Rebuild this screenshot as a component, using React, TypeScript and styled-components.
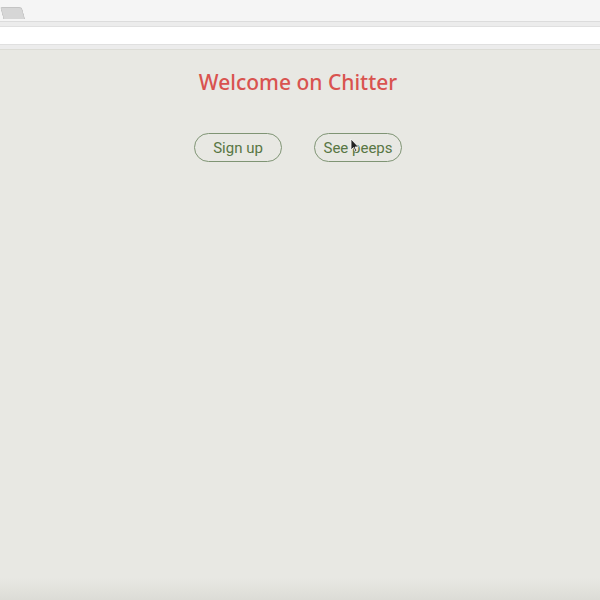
import React from "react";
import styled, { createGlobalStyle } from "styled-components";

const Global = createGlobalStyle`
  html, body { margin: 0; padding: 0; }
  body { background: #e8e8e3; font-family: "Liberation Sans", Arial, sans-serif; }
`;

const Frame = styled.div`
  width: 600px;
  height: 600px;
  display: flex;
  flex-direction: column;
  overflow: hidden;
  position: relative;
`;

const TabStrip = styled.div`
  height: 21px;
  background: #f5f5f5;
  display: flex;
  align-items: flex-end;
  padding-left: 0;
  border-bottom: 1px solid #dcdcdc;
`;

const Tab = styled.div`
  width: 20px;
  height: 11px;
  margin-bottom: 2px;
  background: #d6d6d6;
  border: 1px solid #c4c4c4;
  border-bottom: none;
  border-radius: 2px 3px 0 0;
  transform: skewX(15deg);
  transform-origin: top left;
`;

const Divider = styled.div`
  height: 4px;
  background: #ececec;
  border-bottom: 1px solid #e0e0e0;
`;

const AddressBar = styled.div`
  height: 17px;
  background: #ffffff;
`;

const BottomChrome = styled.div`
  height: 4px;
  background: #ececec;
  border-top: 1px solid #e0e0e0;
  border-bottom: 1px solid #dcdcd6;
`;

const Page = styled.main`
  flex: 1;
  background: linear-gradient(to bottom, #e8e8e3 0%, #e8e8e3 96%, #dcdcd6 100%);
  display: flex;
  flex-direction: column;
  align-items: center;
  padding: 17px 4px 0 0;
`;

const Title = styled.h1`
  margin: 0;
  font-family: "Noto Sans", "Open Sans", sans-serif;
  font-weight: 500;
  font-size: 21px;
  line-height: 30px;
  color: #d9534f;
`;

const Actions = styled.div`
  display: flex;
  gap: 32px;
  margin-top: 36px;
`;

const PillButton = styled.button`
  width: 88px;
  height: 29px;
  border: 1px solid #7f9474;
  border-radius: 15px;
  background: transparent;
  color: #587644;
  font-family: Roboto, "Liberation Sans", Arial, sans-serif;
  font-size: 15px;
  padding: 0;
  cursor: pointer;
`;

const Cursor = styled.svg`
  position: absolute;
  left: 350px;
  top: 138px;
  width: 10px;
  height: 15px;
`;

export default function App() {
  return (
    <Frame>
      <Global />
      <TabStrip>
        <Tab />
      </TabStrip>
      <Divider />
      <AddressBar />
      <BottomChrome />
      <Page>
        <Title>Welcome on Chitter</Title>
        <Actions>
          <PillButton>Sign up</PillButton>
          <PillButton>See peeps</PillButton>
        </Actions>
      </Page>
      <Cursor viewBox="0 0 10 15">
        <path d="M1 1 L1 12 L3.5 9.5 L5.5 14 L7 13.3 L5 9 L8.5 9 Z" fill="#222" stroke="#fff" strokeWidth="0.8" />
      </Cursor>
    </Frame>
  );
}
